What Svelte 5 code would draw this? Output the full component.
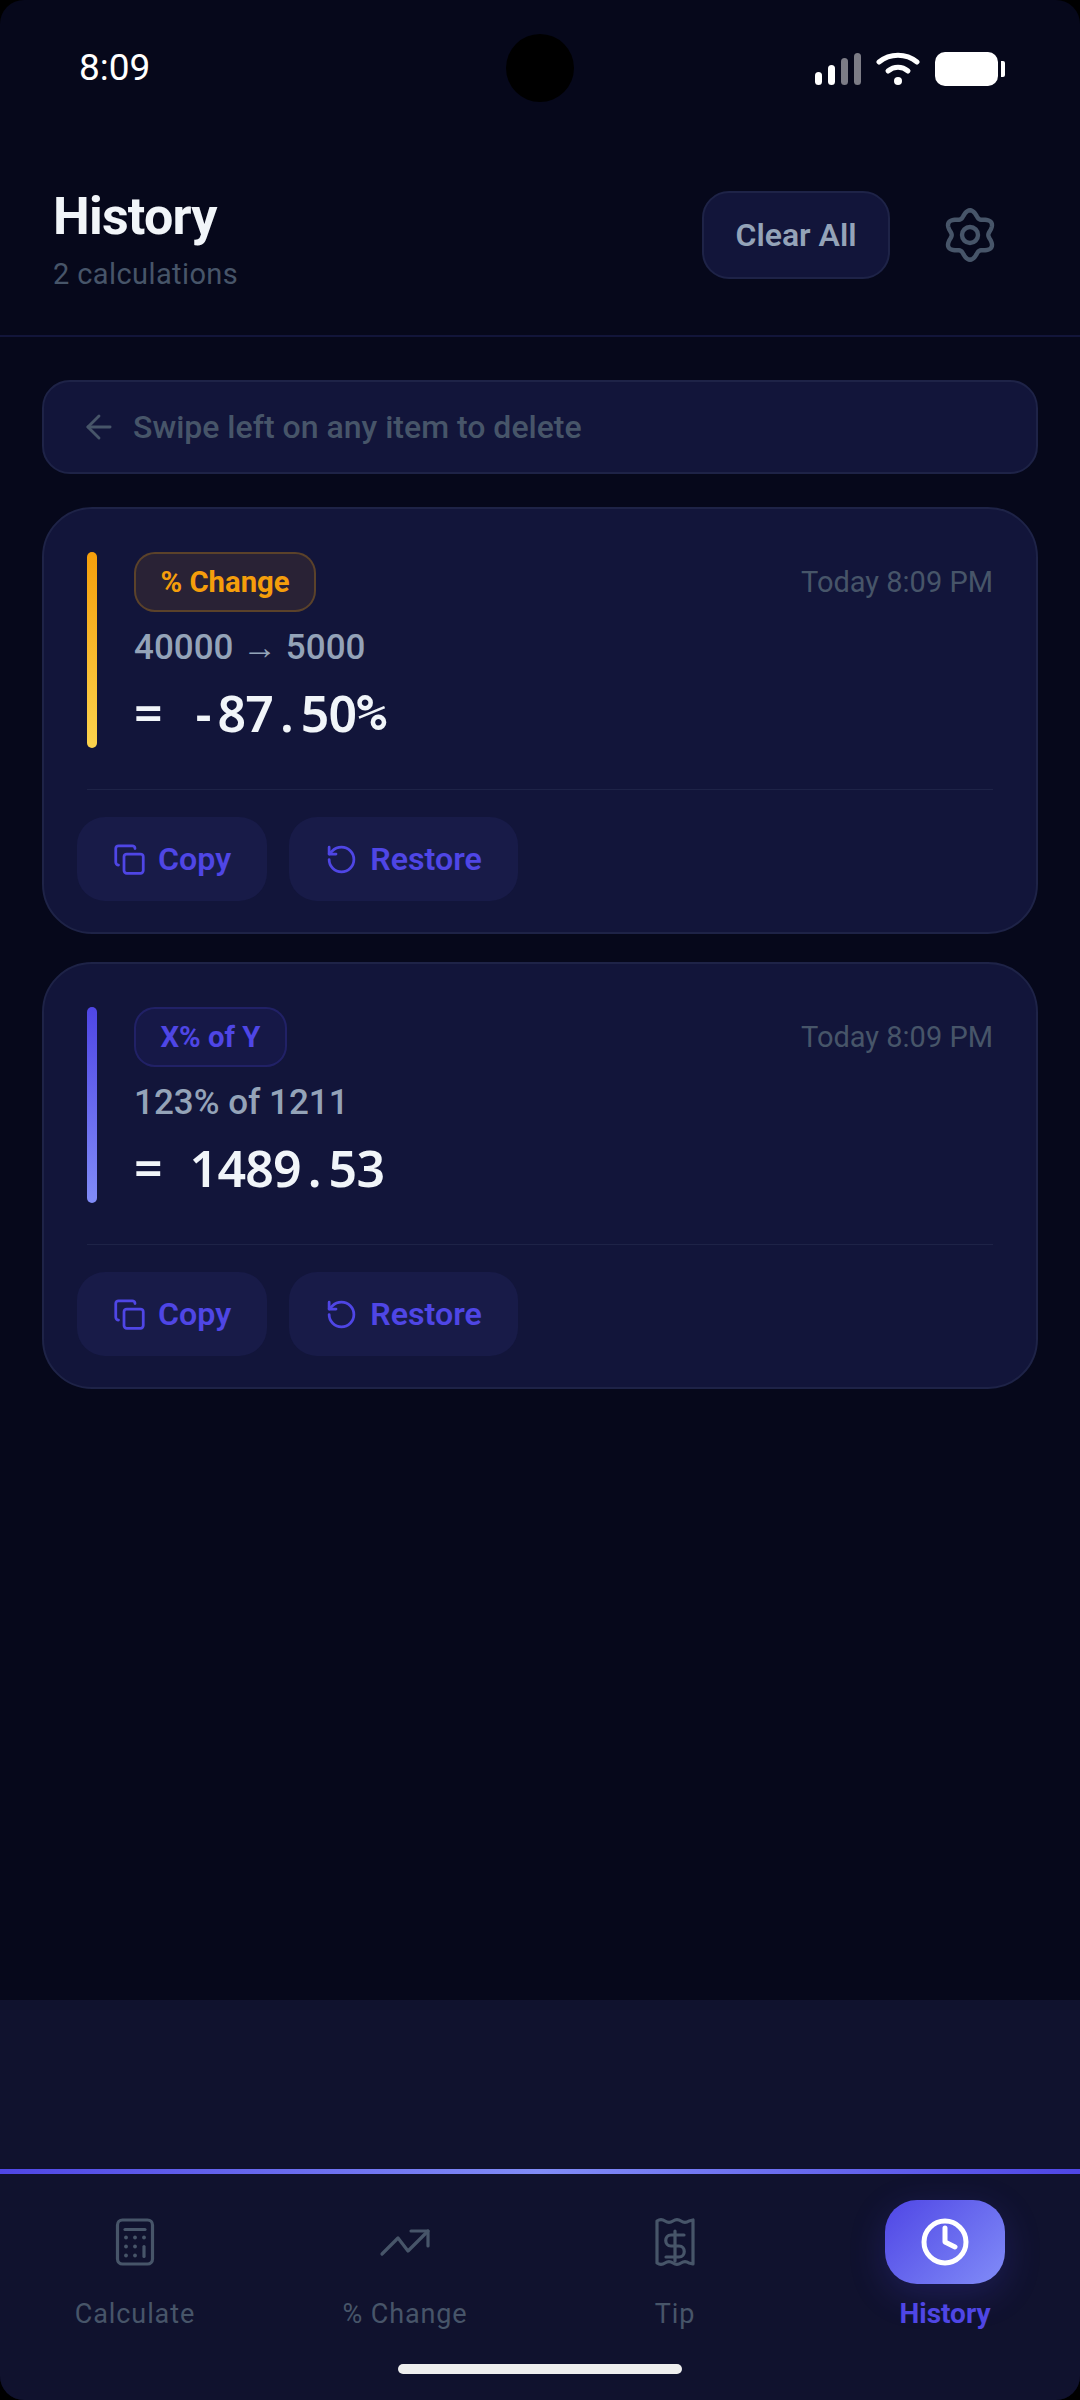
<script>
  const entries = [
    { tag: "% Change", tone: "amber", when: "Today 8:09 PM", source: "40000 → 5000", result: "= -87.50%" },
    { tag: "X% of Y", tone: "indigo", when: "Today 8:09 PM", source: "123% of 1211", result: "= 1489.53" },
  ];

  const tabs = [
    { key: "calc", label: "Calculate" },
    { key: "change", label: "% Change" },
    { key: "tip", label: "Tip" },
    { key: "history", label: "History", active: true },
  ];

  // soft six lobed cog, r swings between valley and lobe
  function gearPath() {
    const pts = [];
    for (let i = 0; i < 120; i++) {
      const t = (i / 120) * Math.PI * 2;
      const r = 21.5 + 3.2 * Math.cos(6 * t);
      const a = t - Math.PI / 2;
      pts.push(`${(30 + r * Math.cos(a)).toFixed(2)} ${(30 + r * Math.sin(a)).toFixed(2)}`);
    }
    return "M" + pts.join("L") + "Z";
  }
</script>

<div class="phone">
  <div class="status">
    <span class="clock">8:09</span>
    <span class="camera"></span>
    <div class="status-icons">
      <div class="signal">
        <i class="s1"></i><i class="s2"></i><i class="s3"></i><i class="s4"></i>
      </div>
      <svg class="wifi" width="44" height="36" viewBox="0 0 44 36" fill="none" stroke="#fff" stroke-width="5" stroke-linecap="round">
        <path d="M3 11C14 2 30 2 41 11" />
        <path d="M12 20C18 15 26 15 32 20" />
        <circle cx="22" cy="30" r="4" fill="#fff" stroke="none" />
      </svg>
      <div class="battery"><span class="cell"></span><span class="nub"></span></div>
    </div>
  </div>

  <header class="top">
    <div class="titles">
      <h1>History</h1>
      <p>2 calculations</p>
    </div>
    <div class="top-actions">
      <button class="clear">Clear All</button>
      <svg class="gear" width="60" height="60" viewBox="0 0 60 60" fill="none" stroke="#475569" stroke-width="4.4">
        <path d={gearPath()} />
        <circle cx="30" cy="30" r="8" />
      </svg>
    </div>
  </header>

  <main class="list">
    <div class="hint">
      <svg width="38" height="38" viewBox="0 0 24 24" fill="none" stroke="#475569" stroke-width="1.8" stroke-linecap="round" stroke-linejoin="round">
        <path d="M19 12H5" /><path d="M12 19l-7-7 7-7" />
      </svg>
      <span>Swipe left on any item to delete</span>
    </div>

    {#each entries as e}
      <section class="card">
        <div class="body">
          <span class="bar {e.tone}"></span>
          <div class="info">
            <div class="head">
              <span class="tag {e.tone}">{e.tag}</span>
              <span class="when">{e.when}</span>
            </div>
            <div class="source">{e.source}</div>
            <div class="result">
              {#each e.result.split("") as ch}
                <span class="ch" class:sym={ch === "%"}>{ch}</span>
              {/each}
            </div>
          </div>
        </div>
        <div class="rule"></div>
        <div class="actions">
          <button class="act">
            <svg width="33" height="33" viewBox="0 0 24 24" fill="none" stroke="currentColor" stroke-width="2" stroke-linecap="round" stroke-linejoin="round">
              <rect x="8" y="8" width="14" height="14" rx="2" />
              <path d="M4 16c-1.1 0-2-.9-2-2V4c0-1.1.9-2 2-2h10c1.1 0 2 .9 2 2" />
            </svg>
            Copy
          </button>
          <button class="act">
            <svg width="33" height="33" viewBox="0 0 24 24" fill="none" stroke="currentColor" stroke-width="2" stroke-linecap="round" stroke-linejoin="round">
              <path d="M3 12a9 9 0 1 0 9-9 9.75 9.75 0 0 0-6.74 2.74L3 8" />
              <path d="M3 3v5h5" />
            </svg>
            Restore
          </button>
        </div>
      </section>
    {/each}
  </main>

  <div class="slot"></div>

  <nav class="tabs">
    {#each tabs as t}
      <div class="tab" class:active={t.active}>
        <span class="tab-icon">
          {#if t.key === "calc"}
            <svg width="60" height="60" viewBox="0 0 60 60" fill="none" stroke="#475569" stroke-width="3.2" stroke-linecap="round">
              <rect x="12.5" y="8" width="35" height="44" rx="5" />
              <path d="M20 17.5H40" />
              <path d="M39 34.5V44.5" />
              <g fill="#475569" stroke="none">
                <circle cx="21" cy="25.5" r="1.9" /><circle cx="30" cy="25.5" r="1.9" /><circle cx="39" cy="25.5" r="1.9" />
                <circle cx="21" cy="34.5" r="1.9" /><circle cx="30" cy="34.5" r="1.9" />
                <circle cx="21" cy="43.5" r="1.9" /><circle cx="30" cy="43.5" r="1.9" />
              </g>
            </svg>
          {:else if t.key === "change"}
            <svg width="60" height="60" viewBox="0 0 60 60" fill="none" stroke="#475569" stroke-width="3.2" stroke-linecap="round" stroke-linejoin="round">
              <path d="M7 42L23 26L33 39L53 19" />
              <path d="M36 19H53V34" />
            </svg>
          {:else if t.key === "tip"}
            <svg width="60" height="60" viewBox="0 0 60 60" fill="none" stroke="#475569" stroke-width="3.2" stroke-linecap="round" stroke-linejoin="round">
              <path d="M12 9C15 7 17 7 20 9S25 11 28 9 33 7 36 9 41 11 44 9L48 8V52L44 51C41 49 39 49 36 51S31 53 28 51 23 49 20 51 15 53 12 51Z" />
              <path d="M39 23H26C19 23 19 34 26 34H34C41 34 41 45 34 45H21" />
              <path d="M30 19V49" />
            </svg>
          {:else}
            <svg width="60" height="60" viewBox="0 0 60 60" fill="none" stroke="#fff" stroke-width="5" stroke-linecap="round" stroke-linejoin="round">
              <circle cx="30" cy="30" r="21" />
              <path d="M30 16V30L40 35" />
            </svg>
          {/if}
        </span>
        <span class="tab-label">{t.label}</span>
      </div>
    {/each}
    <span class="home"></span>
  </nav>
</div>

<style>
  :global(body) {
    margin: 0;
    background: #000;
  }

  .phone {
    width: 1080px;
    height: 2400px;
    display: flex;
    flex-direction: column;
    position: relative;
    overflow: hidden;
    border-radius: 24px;
    background: #06081b;
    font-family: Roboto, sans-serif;
    color: #f1f5f9;
  }

  .status {
    height: 134px;
    flex-shrink: 0;
    display: flex;
    justify-content: space-between;
    align-items: flex-start;
    padding: 47px 75px 0 79px;
    box-sizing: border-box;
  }

  .clock {
    font-size: 37px;
    line-height: 42px;
    color: #fff;
  }

  .camera {
    position: absolute;
    left: 506px;
    top: 34px;
    width: 68px;
    height: 68px;
    border-radius: 50%;
    background: #000;
  }

  .status-icons {
    display: flex;
    align-items: center;
    gap: 15px;
    margin-top: 4px;
  }

  .signal {
    display: flex;
    align-items: flex-end;
    gap: 5.5px;
    height: 32px;
  }

  .signal i {
    display: block;
    width: 7.5px;
    border-radius: 4px;
    background: #fff;
  }

  .s1 { height: 13px; }
  .s2 { height: 20px; }
  .signal .s3 { height: 27px; background: #7c7c86; }
  .signal .s4 { height: 32px; background: #7c7c86; }

  .battery {
    display: flex;
    align-items: center;
    gap: 3px;
  }

  .cell {
    width: 63px;
    height: 34px;
    border-radius: 10px;
    background: #fff;
  }

  .nub {
    width: 4px;
    height: 16px;
    border-radius: 0 2px 2px 0;
    background: #fff;
  }

  .top {
    height: 203px;
    flex-shrink: 0;
    box-sizing: border-box;
    display: flex;
    justify-content: space-between;
    align-items: flex-start;
    padding: 53px 80px 0 53px;
    border-bottom: 2px solid #12153a;
  }

  h1 {
    margin: 0;
    font-size: 52px;
    line-height: 60px;
    font-weight: 700;
    letter-spacing: -0.8px;
  }

  .titles p {
    margin: 10px 0 0;
    font-size: 29px;
    line-height: 34px;
    letter-spacing: 0.4px;
    color: #475569;
  }

  .top-actions {
    display: flex;
    align-items: center;
    gap: 50px;
    margin-top: 4px;
  }

  .clear {
    width: 188px;
    height: 88px;
    padding: 0;
    border-radius: 27px;
    border: 2px solid #1e2347;
    background: #12153a;
    color: #94a3b8;
    font-family: inherit;
    font-size: 32px;
    font-weight: 600;
  }

  .list {
    flex: 1;
    padding: 43px 42px 0;
    display: flex;
    flex-direction: column;
    gap: 28px;
  }

  .hint {
    height: 94px;
    box-sizing: border-box;
    margin-bottom: 5px;
    display: flex;
    align-items: center;
    gap: 15px;
    padding-left: 36px;
    border-radius: 28px;
    border: 2px solid #1e2347;
    background: #12153a;
    font-size: 32px;
    font-weight: 500;
    color: #475569;
  }

  .card {
    box-sizing: border-box;
    height: 427px;
    padding: 43px 43px 0;
    border-radius: 50px;
    border: 2px solid #1e2347;
    background: #12153a;
  }

  .body {
    display: flex;
    gap: 37px;
    height: 196px;
  }

  .bar {
    width: 10px;
    border-radius: 5px;
  }

  .bar.amber { background: linear-gradient(180deg, #f59e0b, #fcd34d); }
  .bar.indigo { background: linear-gradient(180deg, #4f46e5, #818cf8); }

  .info {
    flex: 1;
    min-width: 0;
  }

  .head {
    display: flex;
    justify-content: space-between;
    align-items: center;
  }

  .tag {
    box-sizing: border-box;
    height: 60px;
    display: flex;
    align-items: center;
    padding: 0 24.5px;
    border-radius: 21px;
    border: 2px solid;
    font-size: 29.3px;
    font-weight: 700;
  }

  .tag.amber {
    color: #f59e0b;
    background: rgba(245, 158, 11, 0.1);
    border-color: rgba(245, 158, 11, 0.25);
  }

  .tag.indigo {
    color: #4f46e5;
    background: rgba(79, 70, 229, 0.08);
    border-color: rgba(79, 70, 229, 0.2);
  }

  .when {
    font-size: 29px;
    color: #475569;
  }

  .source {
    margin-top: 16px;
    font-size: 35px;
    line-height: 40px;
    font-weight: 500;
    color: #94a3b8;
  }

  .result {
    margin-top: 15px;
    display: flex;
    height: 60px;
    align-items: center;
    font-family: "Noto Sans", sans-serif;
    font-size: 50px;
    font-weight: 600;
  }

  .ch {
    display: inline-block;
    width: 27.8px;
    text-align: center;
    white-space: pre;
  }

  .ch.sym {
    font-family: "DejaVu Sans Mono", monospace;
    font-weight: 700;
  }

  .rule {
    height: 1px;
    margin-top: 41px;
    background: #1e2347;
  }

  .actions {
    display: flex;
    gap: 22px;
    margin: 27px 0 0 -10px;
  }

  .act {
    height: 84px;
    display: flex;
    align-items: center;
    gap: 12px;
    padding: 0 36px;
    border: none;
    border-radius: 28px;
    background: #181b48;
    color: #4f46e5;
    font-family: inherit;
    font-size: 32.2px;
    font-weight: 600;
  }

  .slot {
    height: 169px;
    flex-shrink: 0;
    background: #10122e;
  }

  .tabs {
    height: 231px;
    flex-shrink: 0;
    box-sizing: border-box;
    position: relative;
    display: grid;
    grid-template-columns: repeat(4, 1fr);
    padding-top: 31px;
    background: #10122e;
  }

  .tabs::before {
    content: "";
    position: absolute;
    left: 0;
    right: 0;
    top: 0;
    height: 5px;
    background: linear-gradient(90deg, #4f46e5, #818cf8, #4f46e5);
  }

  .tab {
    display: flex;
    flex-direction: column;
    align-items: center;
  }

  .tab-icon {
    width: 120px;
    height: 84px;
    display: flex;
    align-items: center;
    justify-content: center;
    border-radius: 32px;
  }

  .tab.active .tab-icon {
    background: linear-gradient(135deg, #4f46e5, #818cf8);
    box-shadow: 0 10px 36px rgba(79, 70, 229, 0.22);
  }

  .tab-label {
    margin-top: 14px;
    font-size: 27px;
    line-height: 32px;
    letter-spacing: 0.9px;
    color: #475569;
  }

  .tab.active .tab-label {
    color: #4f46e5;
    font-weight: 700;
    font-size: 28px;
    letter-spacing: 0;
  }

  .home {
    position: absolute;
    left: 398px;
    top: 195px;
    width: 284px;
    height: 10px;
    border-radius: 5px;
    background: #eeeeee;
  }
</style>
